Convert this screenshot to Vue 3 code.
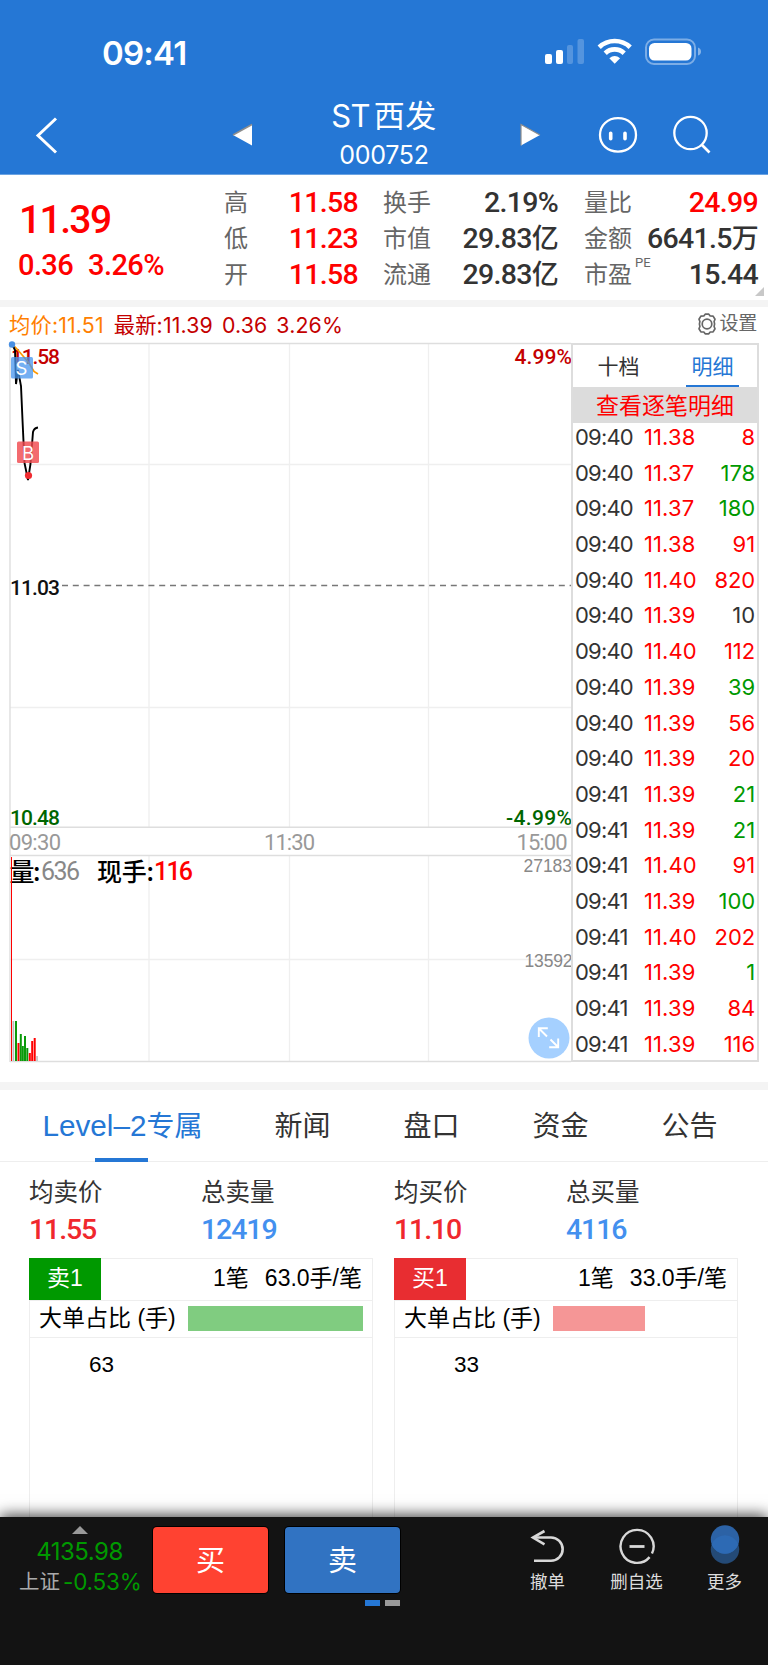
<template>
  <div class="page">
    <header class="header">
      <div class="status-bar">
        <span class="clock">09:41</span>
        <svg class="status-icons" width="158" height="30" viewBox="0 0 158 30">
          <g fill="#fff">
            <rect x="0" y="16" width="7" height="10" rx="2" />
            <rect x="11" y="12" width="7" height="14" rx="2" />
            <rect x="22" y="7" width="6" height="19" rx="2" opacity=".22" />
            <rect x="32.500" y="1" width="6.500" height="25" rx="2" opacity=".22" />
          </g>
          <g fill="none" stroke="#fff" stroke-width="4.700">
            <path d="M54.200 9.200a22.500 22.500 0 0 1 31 0" />
            <path d="M60.200 15.200a13.800 13.800 0 0 1 19 0" />
          </g>
          <path d="M64.300 20.200q5.400-4.200 10.800 0l-5.400 5.600z" fill="#fff" />
          <rect x="101" y="1.500" width="49" height="24.500" rx="8" fill="none" stroke="#fff" stroke-width="2" opacity=".4" />
          <rect x="104" y="5" width="42.500" height="17.500" rx="5.500" fill="#fff" />
          <path d="M153 9.500q3 1 3 4t-3 4z" fill="#fff" opacity=".45" />
        </svg>
      </div>
      <div class="nav-bar">
        <svg class="back" width="24" height="40" viewBox="0 0 24 40">
          <path d="M21 3.500L3 20.500l18 17" fill="none" stroke="#fff" stroke-width="3" />
        </svg>
        <svg class="prev" width="22" height="24" viewBox="0 0 22 24">
          <path d="M1 12L20 1.500v21z" fill="#fff" />
          <path d="M1 12L20 1.500" stroke="#8d8d8d" stroke-width="1.500" />
        </svg>
        <div class="stock">
          <div class="stock-name">ST<span>西发</span></div>
          <div class="stock-code">000752</div>
        </div>
        <svg class="next" width="22" height="24" viewBox="0 0 22 24">
          <path d="M1 1.500L20 12 1 22.500z" fill="#fff" />
          <path d="M1 22.500v-21L20 12" fill="none" stroke="#8d8d8d" stroke-width="1.200" />
        </svg>
        <svg class="robot" width="40" height="38" viewBox="0 0 40 38">
          <path d="M20 2.200C30.500 2.200 38 9.300 38 19s-7.500 16.600-18 16.600S2 28.600 2 19 9.500 2.200 20 2.200z" fill="none" stroke="#fff" stroke-width="2.300" />
          <path d="M12.700 17.300v5.500M27 17.300v5.500" stroke="#fff" stroke-width="3.600" stroke-linecap="round" />
        </svg>
        <svg class="search" width="40" height="40" viewBox="0 0 40 40">
          <circle cx="18.500" cy="18" r="16.200" fill="none" stroke="#fff" stroke-width="2.300" />
          <path d="M29.500 29.500l8 8" stroke="#fff" stroke-width="2.600" />
        </svg>
      </div>
    </header>

    <section class="quote">
      <div class="quote-main">
        <div class="last-price">11.39</div>
        <div class="change"><span>0.36</span><span>3.26%</span></div>
      </div>
      <div v-for="(col, c) in quoteCols" :key="c" class="quote-col" :class="'quote-col-' + c">
        <div v-for="item in col" :key="item.label" class="quote-item">
          <span class="quote-label">{{ item.label }}<sup v-if="item.sup">{{ item.sup }}</sup></span>
          <span class="quote-value" :class="item.color">{{ item.value }}<i v-if="item.unit">{{ item.unit }}</i></span>
        </div>
      </div>
      <div class="corner"></div>
    </section>

    <section class="info-bar">
      <span class="avg">均价:11.51</span>
      <span class="newest">最新:11.39</span>
      <span class="newest">0.36</span>
      <span class="newest">3.26%</span>
      <div class="settings">
        <svg width="22" height="22" viewBox="0 0 22 22" fill="none" stroke="#666" stroke-width="1.700">
          <path d="M7.800 3L9.200 1.200h3.600L14.200 3l2.900.1 1.900 3.200-.9 2.200q1 2.500 0 5l.9 2.200-1.900 3.200-2.900.1-1.400 1.800H9.200L7.800 19l-2.900-.1L3 15.700l.9-2.200q-1-2.500 0-5L3 6.300l1.900-3.200z" stroke-linejoin="round" />
          <circle cx="11" cy="11" r="4.800" />
        </svg>
        <span>设置</span>
      </div>
    </section>

    <section class="market">
      <svg class="chart" width="562" height="720" viewBox="9 343 562 720">
        <g stroke="#efefef" stroke-width="1.300">
          <path d="M149 344V827M289.500 344V827M428.500 344V827M149 856V1061M289.500 856V1061M428.500 856V1061" />
          <path d="M10 464.500H571M10 707.500H571M10 959.500H571" />
        </g>
        <path d="M10 1062V855.500H571M10 1061.500H571M10 855V343.500H571M10 827.300H571" fill="none" stroke="#dedede" stroke-width="1.400" />
        <path d="M62 585.500H571" stroke="#777" stroke-width="1.300" stroke-dasharray="6 4.800" />

        <g class="din">
          <text x="11" y="364" textLength="49" fill="#c40000">11.58</text>
          <text x="514.500" y="364" textLength="57.500" fill="#c40000">4.99%</text>
          <text x="10" y="595" textLength="50" fill="#111">11.03</text>
          <text x="10" y="825" textLength="50" fill="#006600">10.48</text>
          <text x="506" y="825" textLength="66" fill="#006600">-4.99%</text>
        </g>
        <g class="axis">
          <text x="9" y="849.500" textLength="52">09:30</text>
          <text x="264" y="849.500" textLength="51">11:30</text>
          <text x="516.500" y="849.500" textLength="51">15:00</text>
        </g>

        <path d="M12 344l5 5 12 14 5 8.500 4 2.500" fill="none" stroke="#ff9900" stroke-width="1.700" />
        <path d="M12 344l3 6 1 34 2-14 3 16 1.500 34 2 43L28 480l2.500-16 2.500-32q1-4 5-4.500" fill="none" stroke="#000" stroke-width="1.900" />
        <circle cx="12" cy="344.500" r="3.200" fill="#4a90e2" />
        <circle cx="28.500" cy="475.500" r="3.600" fill="#f02b30" />
        <rect x="11" y="357" width="22" height="21.500" rx="1.500" fill="#4694ee" opacity=".75" />
        <rect x="17" y="441.500" width="22" height="21.500" rx="1.500" fill="#f04a4f" opacity=".82" />
        <text class="mark" x="21.500" y="374.500">S</text>
        <text class="mark" x="28" y="459.500">B</text>

        <g class="vol-title">
          <text x="9.500" y="880.500" textLength="31">量:</text>
          <text class="vol-num" x="41" y="880" textLength="39" fill="#888">636</text>
          <text x="97" y="880.500" textLength="57">现手:</text>
          <text class="vol-num now" x="154" y="880" textLength="39" fill="#f00">116</text>
        </g>
        <g class="vol-axis">
          <text x="523.500" y="872" textLength="48.500">27183</text>
          <text x="524.500" y="966.500" textLength="48">13592</text>
        </g>
        <rect v-for="(bar, i) in volumes" :key="i" :x="bar[0]" :y="bar[2]" :width="bar[1]" :height="1061 - bar[2]" :fill="bar[3]" />

        <circle cx="549" cy="1038" r="20.500" fill="#a5d0ff" />
        <path d="M547 1036.500L539 1028.500M538.800 1037v-8.800h9M550.500 1039.500l7.500 7.500M558.200 1038.500v8.800h-9" fill="none" stroke="#fff" stroke-width="1.900" />
      </svg>

      <div class="ticks">
        <div class="tick-tabs">
          <span>十档</span>
          <span class="active">明细</span>
        </div>
        <div class="tick-banner">查看逐笔明细</div>
        <div class="tick-list">
          <div v-for="(t, i) in ticks" :key="i" class="tick">
            <span class="tick-time">{{ i < 10 ? '09:40' : '09:41' }}</span>
            <span class="tick-price">{{ t[0] }}</span>
            <span class="tick-qty" :class="t[2]">{{ t[1] }}</span>
          </div>
        </div>
      </div>
    </section>

    <nav class="tabs">
      <span class="tab active"><b>Level–2</b>专属</span>
      <span v-for="tab in tabs" :key="tab" class="tab">{{ tab }}</span>
    </nav>

    <section class="level2">
      <div v-for="side in sides" :key="side.tag" class="side">
        <div class="summary">
          <div class="summary-item">
            <span>{{ side.avgLabel }}</span>
            <strong>{{ side.avg }}</strong>
          </div>
          <div class="summary-item">
            <span>{{ side.totalLabel }}</span>
            <strong class="blue">{{ side.total }}</strong>
          </div>
        </div>
        <div class="book">
          <div class="book-head">
            <span class="tag" :class="side.kind">{{ side.tag }}</span>
            <span class="count">1笔</span>
            <span class="per">{{ side.per }}手/笔</span>
          </div>
          <div class="book-ratio">
            <span>大单占比 (手)</span>
            <div class="ratio" :class="side.kind" :style="{ width: side.width + 'px' }"></div>
          </div>
          <div class="book-qty">{{ side.qty }}</div>
        </div>
      </div>
    </section>

    <footer class="footer">
      <div class="index">
        <div class="index-arrow"></div>
        <div class="index-value">4135.98</div>
        <div class="index-row"><span>上证</span><em>-0.53%</em></div>
      </div>
      <button class="trade buy">买</button>
      <div class="sell-wrap">
        <button class="trade sell">卖</button>
        <div class="pager"><i class="on"></i><i></i></div>
      </div>
      <div class="actions">
        <div class="action undo">
          <svg width="40" height="40" viewBox="0 0 40 40" fill="none" stroke="#d8d8d8" stroke-width="2.600">
            <path d="M5 12.500h18a11.500 11.500 0 0 1 0 23.300H6" />
            <path d="M16.500 6L5 12.500l11.500 6.800" />
          </svg>
          <span>撤单</span>
        </div>
        <div class="action remove">
          <svg width="40" height="40" viewBox="0 0 40 40" fill="none" stroke="#d8d8d8" stroke-width="2.400">
            <path d="M34.950 28.500A16.500 16.500 0 1 0 32.600 32.100" />
            <path d="M12.500 21.500h15" stroke-width="2.800" />
          </svg>
          <span>删自选</span>
        </div>
        <div class="action more">
          <svg width="40" height="40" viewBox="0 0 40 40">
            <circle cx="20" cy="24.500" r="14.200" fill="#244a76" />
            <circle cx="20" cy="14.500" r="14.200" fill="#2c62a5" />
            <path d="M6.700 19.500a14.200 14.200 0 0 1 26.600 0 14.200 14.200 0 0 1-26.600 0z" fill="#2d6ab4" />
          </svg>
          <span>更多</span>
        </div>
      </div>
    </footer>
  </div>
</template>

<script setup>
const quoteCols = [
  [
    { label: '高', value: '11.58', color: 'red' },
    { label: '低', value: '11.23', color: 'red' },
    { label: '开', value: '11.58', color: 'red' }
  ],
  [
    { label: '换手', value: '2.19%' },
    { label: '市值', value: '29.83', unit: '亿' },
    { label: '流通', value: '29.83', unit: '亿' }
  ],
  [
    { label: '量比', value: '24.99', color: 'red' },
    { label: '金额', value: '6641.5', unit: '万' },
    { label: '市盈', value: '15.44', sup: 'PE' }
  ]
]

const ticks = [
  ['11.38', 8, 'red'],
  ['11.37', 178, 'green'],
  ['11.37', 180, 'green'],
  ['11.38', 91, 'red'],
  ['11.40', 820, 'red'],
  ['11.39', 10, ''],
  ['11.40', 112, 'red'],
  ['11.39', 39, 'green'],
  ['11.39', 56, 'red'],
  ['11.39', 20, 'red'],
  ['11.39', 21, 'green'],
  ['11.39', 21, 'green'],
  ['11.40', 91, 'red'],
  ['11.39', 100, 'green'],
  ['11.40', 202, 'red'],
  ['11.39', 1, 'green'],
  ['11.39', 84, 'red'],
  ['11.39', 116, 'red']
]

// x, width, top, color
const volumes = [
  [11, 1, 857, '#f00'],
  [12.5, 1.7, 1021, '#bbb'],
  [15, 2, 1021, '#0a9a0a'],
  [17.5, 2, 1043, '#f00'],
  [19.8, 2, 1034, '#0a9a0a'],
  [21.8, 2, 1046, '#0a9a0a'],
  [24, 2, 1036, '#0a9a0a'],
  [26.3, 2, 1048, '#0a9a0a'],
  [28.8, 2, 1053, '#f00'],
  [31.2, 2, 1041, '#f00'],
  [33.7, 2, 1038, '#f00'],
  [36.3, 1.5, 1056, '#bbb']
]

const tabs = ['新闻', '盘口', '资金', '公告']

const sides = [
  { kind: 'ask', tag: '卖1', avgLabel: '均卖价', avg: '11.55', totalLabel: '总卖量', total: '12419', per: '63.0', width: 175, qty: 63 },
  { kind: 'bid', tag: '买1', avgLabel: '均买价', avg: '11.10', totalLabel: '总买量', total: '4116', per: '33.0', width: 92, qty: 33 }
]
</script>

<style>
body {
  margin: 0;
  background: #fff;
}
</style>

<style scoped>
.page {
  display: flex;
  flex-direction: column;
  width: 768px;
  height: 1665px;
  overflow: hidden;
  background: #fff;
  color: #333;
  font-family: Inter, "Noto Sans CJK SC", sans-serif;
}

svg {
  display: block;
  flex: none;
}

.page span,
.page strong,
.page text {
  white-space: nowrap;
}

.header {
  height: 174px;
  flex: none;
  background: #2577d5;
  border-bottom: 1px solid #6ba3e2;
  color: #fff;
}

.status-bar {
  display: flex;
  justify-content: space-between;
  height: 96px;
  padding: 0 65px 0 102px;
}

.clock {
  padding-top: 33px;
  font-size: 33px;
  line-height: 40px;
  font-weight: 600;
  letter-spacing: -0.8px;
}

.status-icons {
  margin-top: 38px;
}

.nav-bar {
  display: flex;
  align-items: flex-start;
  height: 78px;
}

.back {
  margin: 19px 0 0 35px;
}

.prev {
  margin: 27px 0 0 173px;
}

.stock {
  flex: none;
  width: 262px;
  margin-left: -1px;
  text-align: center;
}

.stock-name {
  height: 42px;
  margin-top: -1px;
  font-size: 31px;
  line-height: 42px;
  font-weight: 400;
  letter-spacing: -0.8px;
}

.stock-name span {
  margin-left: 4px;
  font-size: 31px;
  letter-spacing: 0.5px;
}

.stock-code {
  margin-top: 3px;
  font-size: 25px;
  line-height: 31px;
  font-weight: 400;
  letter-spacing: -0.3px;
}

.next {
  margin: 27px 0 0 5px;
}

.robot {
  margin: 20px 0 0 56px;
}

.search {
  margin: 19px 0 0 34px;
}

.quote {
  position: relative;
  display: flex;
  flex: none;
  height: 125px;
  border-bottom: 7px solid #f4f4f4;
  font-family: Roboto, "Noto Sans CJK SC", sans-serif;
}

.quote-main {
  width: 224px;
  padding-left: 19px;
  box-sizing: border-box;
  color: #f00;
}

.last-price {
  margin-top: 22px;
  font-size: 39px;
  line-height: 46px;
  font-weight: 500;
  letter-spacing: -1.6px;
}

.change {
  display: flex;
  gap: 15px;
  margin-left: -1px;
  font-size: 29px;
  line-height: 45px;
  font-weight: 500;
  letter-spacing: -0.6px;
}

.quote-col {
  padding-top: 10px;
}

.quote-col-0 {
  width: 134px;
}

.quote-col-1 {
  width: 175px;
  margin-left: 25px;
}

.quote-col-2 {
  width: 174px;
  margin-left: 26px;
}

.quote-item {
  display: flex;
  justify-content: space-between;
  height: 36px;
  line-height: 36px;
}

.quote-label {
  color: #666;
  font-size: 24px;
}

.quote-label sup {
  display: inline-block;
  margin-left: 3px;
  font-size: 13px;
  line-height: 12px;
  vertical-align: 16px;
}

.quote-value {
  font-size: 28.5px;
  font-weight: 500;
  letter-spacing: -0.7px;
}

.quote-value i {
  font-size: 27px;
  font-style: normal;
  line-height: 30px;
}

.red {
  color: #f00;
}

.green {
  color: #009900;
}

.corner {
  position: absolute;
  right: 4px;
  bottom: 4px;
  border-left: 9px solid transparent;
  border-bottom: 9px solid #c8c8c8;
}

.info-bar {
  display: flex;
  align-items: center;
  flex: none;
  height: 35px;
  padding: 0 11px 1px 9px;
  font-size: 21.3px;
  line-height: 30px;
  letter-spacing: 0.15px;
}

.avg {
  margin-right: 10px;
  color: #ff8000;
}

.newest {
  margin-right: 9px;
  color: #c40000;
}

.settings {
  display: flex;
  align-items: center;
  gap: 2px;
  margin-left: auto;
  margin-top: -2px;
  color: #666;
  font-size: 19px;
  letter-spacing: -0.3px;
}

.market {
  display: flex;
  flex: none;
  height: 739px;
  padding-left: 9px;
}

.chart {
  overflow: visible;
}

.din {
  font: 500 21px Roboto, sans-serif;
}

.axis {
  fill: #999;
  font: 400 22px Roboto, sans-serif;
}

.mark {
  fill: #fff;
  font-size: 18.5px;
  text-anchor: middle;
}

.vol-title {
  font: 500 25px "Noto Sans CJK SC", sans-serif;
}

.vol-num {
  font: 400 25px Roboto, sans-serif;
}

.vol-num.now {
  font-weight: 500;
}

.vol-axis {
  fill: #888;
  font: 400 17.5px "Liberation Sans", sans-serif;
}

.ticks {
  width: 188px;
  height: 719px;
  box-sizing: border-box;
  border: 2px solid #ddd;
}

.tick-tabs {
  display: flex;
  justify-content: space-between;
  height: 42px;
  padding: 0 18px 0 19px;
  font-size: 21px;
  line-height: 43px;
}

.tick-tabs span {
  width: 53px;
  box-sizing: border-box;
  height: 42px;
  text-align: center;
}

.tick-tabs .active {
  border-bottom: 2px solid #2577d5;
  color: #2577d5;
}

.tick-banner {
  height: 36px;
  background: #dcdcdc;
  color: #f00;
  font-size: 23px;
  line-height: 38px;
  text-align: center;
}

.tick-list {
  padding: 0 2px;
  margin-top: -4px;
}

.tick {
  display: flex;
  height: 35.7px;
  font-size: 22px;
  line-height: 36px;
}

.tick-time {
  width: 69px;
  letter-spacing: -0.8px;
}

.tick-price {
  color: #f00;
  letter-spacing: 0.1px;
}

.tick-qty {
  margin-left: auto;
  letter-spacing: -0.1px;
}

.tabs {
  display: flex;
  flex: none;
  height: 80px;
  box-sizing: border-box;
  border-top: 8px solid #f4f4f4;
  border-bottom: 1px solid #eee;
  font-size: 28px;
  line-height: 72px;
}

.tab {
  position: relative;
  width: 129px;
  text-align: center;
}

.tab.active {
  width: 231px;
  padding-left: 7px;
  color: #2577d5;
}

.tab.active b {
  font-family: "Liberation Sans", sans-serif;
  font-size: 29.7px;
  font-weight: 400;
}

.tab.active::after {
  position: absolute;
  left: 95px;
  bottom: -1px;
  width: 53px;
  height: 4px;
  background: #2577d5;
  content: "";
}

.level2 {
  display: flex;
  flex: 1;
  gap: 21px;
  min-height: 0;
  padding: 0 29px;
  overflow: hidden;
}

.side {
  display: flex;
  flex-direction: column;
  width: 344px;
}

.summary {
  display: flex;
  flex: none;
  height: 96px;
  padding-top: 12px;
  box-sizing: border-box;
}

.summary-item {
  display: flex;
  flex-direction: column;
  width: 173px;
  font-size: 24.5px;
  line-height: 36px;
}

.summary-item strong {
  margin-top: 1px;
  color: #f0282d;
  font: 500 28.5px/38px Roboto, sans-serif;
  letter-spacing: -1.1px;
}

.summary-item .blue {
  color: #4390ef;
}

.book {
  flex: 1;
  border: 1px solid #eee;
  border-bottom: 0;
  box-sizing: border-box;
  color: #000;
  font-family: "Liberation Sans", "Noto Sans CJK SC", sans-serif;
  font-size: 23px;
}

.book-head {
  display: flex;
  height: 41px;
  border-bottom: 1px solid #eee;
  line-height: 39px;
}

.tag {
  width: 72px;
  height: 42px;
  margin: -1px auto 0 -1px;
  color: #fff;
  line-height: 41px;
  text-align: center;
}

.tag.ask {
  background: #009900;
}

.tag.bid {
  background: #e82d31;
}

.count {
  margin-right: 16px;
}

.per {
  margin-right: 10px;
}

.book-ratio {
  display: flex;
  align-items: center;
  height: 36px;
  padding-left: 9px;
  border-bottom: 1px solid #eee;
}

.book-ratio span {
  width: 149px;
  margin-top: -2px;
  line-height: 34px;
}

.ratio {
  height: 25px;
  margin-top: -2px;
}

.ratio.ask {
  background: #80cc80;
}

.ratio.bid {
  background: #f59696;
}

.book-qty {
  width: 143px;
  padding-top: 13px;
  font-size: 22.5px;
  line-height: 28px;
  text-align: center;
}

.footer {
  position: relative;
  display: flex;
  flex: none;
  height: 148px;
  background: #131313;
  box-shadow: 0 -2px 14px rgba(0, 0, 0, 0.75);
}

.index {
  width: 153px;
  padding: 9px 0 0 6px;
  box-sizing: border-box;
  color: #009900;
  font-size: 24px;
  text-align: center;
}

.index-arrow {
  width: 0;
  margin: 0 auto;
  border: 8px solid transparent;
  border-top: 0;
  border-bottom-color: #999;
}

.index-value {
  margin-top: 3px;
  line-height: 29px;
  letter-spacing: -0.5px;
}

.index-row {
  display: flex;
  gap: 3px;
  padding-left: 13px;
  line-height: 31px;
}

.index-row span {
  color: #aaa;
  font-size: 20.5px;
}

.index-row em {
  font-size: 22.5px;
  font-style: normal;
  letter-spacing: -0.2px;
}

.trade {
  display: block;
  width: 115px;
  height: 66px;
  padding: 0 0 4px;
  margin-top: 10px;
  border: 0;
  border-radius: 4px;
  box-shadow: 0 0 0 1px #000;
  color: #fff;
  font: 400 29px "Noto Sans CJK SC", sans-serif;
}

.buy {
  background: #ff4231;
}

.sell {
  background: #3173c2;
}

.sell-wrap {
  margin-left: 17px;
}

.pager {
  display: flex;
  justify-content: flex-end;
  gap: 5px;
  margin-top: 7px;
}

.pager i {
  width: 15px;
  height: 6px;
  background: #999;
}

.pager .on {
  background: #2577d5;
}

.actions {
  display: flex;
  padding-left: 103px;
}

.action {
  display: flex;
  flex-direction: column;
  align-items: center;
  width: 89px;
  padding-top: 8px;
  color: #ddd;
  font-size: 17.5px;
  line-height: 34px;
}

.more {
  width: 87px;
}
</style>
